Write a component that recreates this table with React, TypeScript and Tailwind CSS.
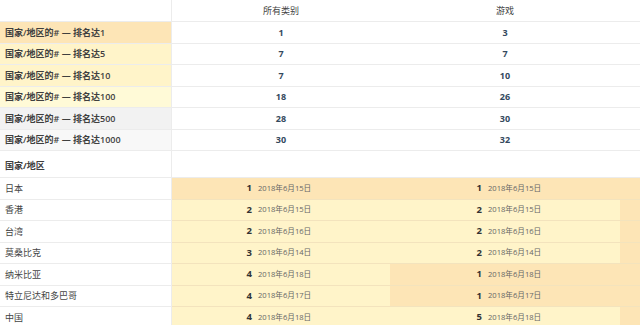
const ORANGE = "bg-[#fde5b6]"
const YELLOW = "bg-[#fff4c9]"

const topRows = [
  { label: "国家/地区的# — 排名达1", bg: "bg-[#fde5b6]", all: 1, games: 3 },
  { label: "国家/地区的# — 排名达5", bg: "bg-[#fff4c9]", all: 7, games: 7 },
  { label: "国家/地区的# — 排名达10", bg: "bg-[#fff4c9]", all: 7, games: 10 },
  { label: "国家/地区的# — 排名达100", bg: "bg-[#fffad7]", all: 18, games: 26 },
  { label: "国家/地区的# — 排名达500", bg: "bg-[#f2f2f2]", all: 28, games: 30 },
  { label: "国家/地区的# — 排名达1000", bg: "bg-[#f8f8f8]", all: 30, games: 32 },
]

const countries = [
  { name: "日本", a: [1, "2018年6月15日"], g: [1, "2018年6月15日"] },
  { name: "香港", a: [2, "2018年6月15日"], g: [2, "2018年6月15日"] },
  { name: "台湾", a: [2, "2018年6月16日"], g: [2, "2018年6月16日"] },
  { name: "莫桑比克", a: [3, "2018年6月14日"], g: [2, "2018年6月14日"] },
  { name: "纳米比亚", a: [4, "2018年6月18日"], g: [1, "2018年6月18日"] },
  { name: "特立尼达和多巴哥", a: [4, "2018年6月17日"], g: [1, "2018年6月17日"] },
  { name: "中国", a: [4, "2018年6月18日"], g: [5, "2018年6月18日"] },
] as const

function RankCell({ rank, date, width }: { rank: number; date: string; width: string }) {
  const bg = rank === 1 ? ORANGE : YELLOW
  return (
    <div className={`${width} ${bg} flex items-center border-b border-[#f3e3bd]`}>
      <span className="flex-1 text-right pr-[6px] text-[9.5px] font-bold text-[#333]">{rank}</span>
      <span className="w-[132px] text-[7.6px] text-[#666]">{date}</span>
    </div>
  )
}

export default function App() {
  return (
    <div
      className="w-[640px] h-[325px] overflow-hidden bg-white text-[#444]"
      style={{ fontFamily: '"Open Sans", "Noto Sans CJK SC", sans-serif' }}
    >
      {/* summary table */}
      <div className="flex h-[22px] border-b border-[#ececec] text-[9px] text-[#444]">
        <div className="w-[172px] border-r border-[#ececec]" />
        <div className="w-[218px] flex items-center justify-center">所有类别</div>
        <div className="w-[230px] flex items-center justify-center">游戏</div>
        <div className="flex-1" />
      </div>
      {topRows.map((r) => (
        <div key={r.label} className="flex h-[21.5px] border-b border-[#ececec]">
          <div className={`w-[172px] ${r.bg} border-r border-[#ececec] flex items-center pl-[5px] text-[9px] font-semibold text-[#3f3f3f]`}>
            {r.label}
          </div>
          <div className="w-[218px] flex items-center justify-center text-[9px] font-bold text-[#34495e]">{r.all}</div>
          <div className="w-[230px] flex items-center justify-center text-[9px] font-bold text-[#34495e]">{r.games}</div>
          <div className="flex-1" />
        </div>
      ))}

      {/* per-country table */}
      <div className="flex h-[27px] border-b border-[#ececec]">
        <div className="w-[172px] border-r border-[#ececec] flex items-end pb-[5px] pl-[5px] text-[9px] font-bold text-[#3f3f3f]">
          国家/地区
        </div>
        <div className="flex-1" />
      </div>
      {countries.map((c) => (
        <div key={c.name} className="flex h-[21.5px]">
          <div className="w-[172px] border-r border-b border-[#ececec] flex items-center pl-[5px] text-[9px] text-[#444]">
            {c.name}
          </div>
          <RankCell rank={c.a[0]} date={c.a[1]} width="w-[218px]" />
          <RankCell rank={c.g[0]} date={c.g[1]} width="w-[230px]" />
          <div className={`flex-1 ${ORANGE} border-b border-[#f3e3bd]`} />
        </div>
      ))}
    </div>
  )
}
